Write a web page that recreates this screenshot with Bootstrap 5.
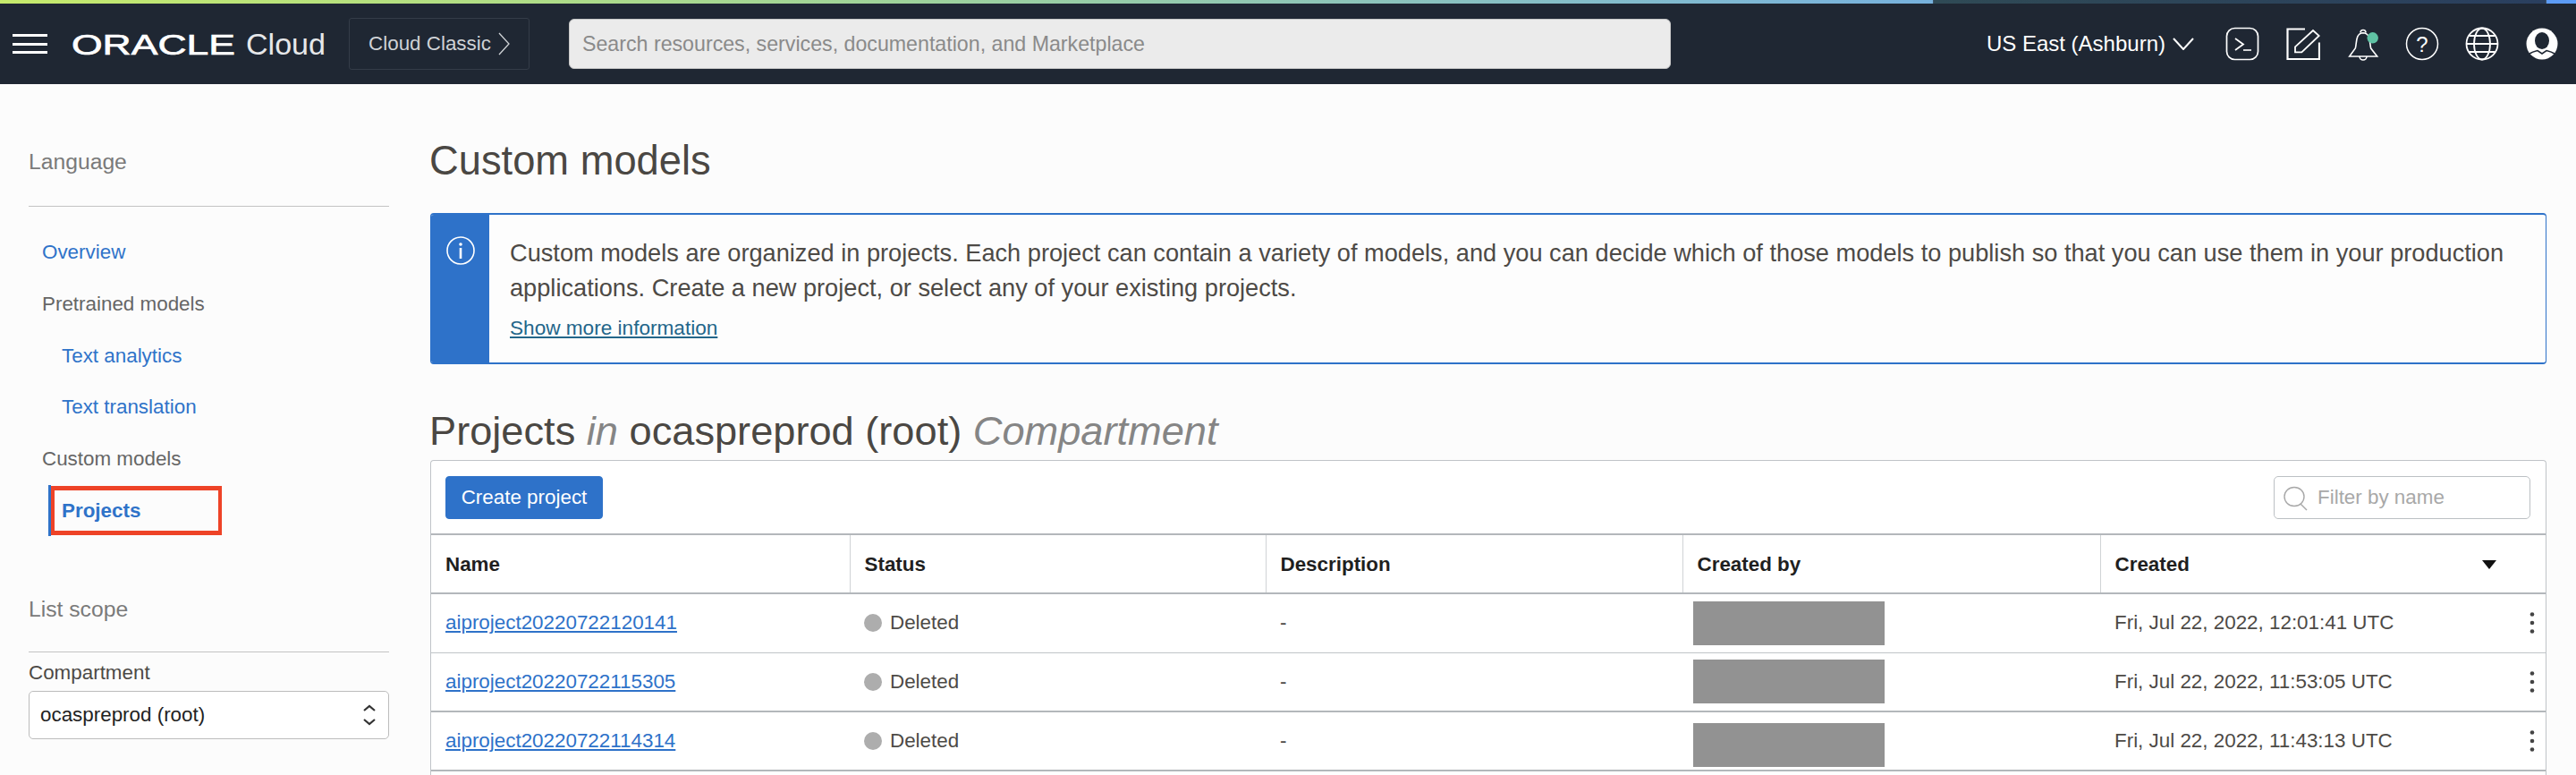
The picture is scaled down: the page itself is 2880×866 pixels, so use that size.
<!DOCTYPE html>
<html lang="en">
<head>
<meta charset="utf-8">
<title>Custom models</title>
<link href="https://cdn.jsdelivr.net/npm/bootstrap@5.3.0/dist/css/bootstrap.min.css" rel="stylesheet">
<style>
html,body{height:866px;overflow:hidden;}
body{background:#fcfcfc;font-family:"Liberation Sans",Arial,sans-serif;font-size:22.4px;color:#4d4a46;}
.top-stripe{height:4px;background:linear-gradient(90deg,#c6ea6c 0%,#9fd39a 35%,#7cb6d8 70%,#5c9bf6 100%);}
.drop-panel{position:absolute;top:0;left:2161px;width:686px;height:20px;background:linear-gradient(90deg,#2f4a55,#2a3f5f);border:1.5px solid #3d5266;border-top:0;border-radius:0 0 12px 12px;}
.oci-bar{height:90px;background:#1f2733;padding:0;flex-wrap:nowrap;justify-content:flex-start;}
.burger{width:39px;margin-left:14px;}
.burger span{height:3px;background:#fff;margin-bottom:6.5px;}
.burger span:last-child{margin-bottom:0;}
.logo-svg{margin-left:27px;}
.classic-box{margin-left:26px;width:202px;height:58px;border:1px solid #343c48;border-radius:3px;color:#cfd2d6;font-size:22.4px;}
.search-box.form-control{margin-left:44px;width:1232px;height:56px;flex:none;background:#ebebeb;border:1px solid #c7c7c7;border-radius:6px;padding:0 14px;font-size:23.2px;}
.search-box::placeholder{color:#8a8a8a;opacity:1;}
.region-name{color:#fff;font-size:24px;}
.icon-row{gap:27px;margin:0 18px 0 34px;}
.side-col{width:403px;margin-left:32px;margin-right:46px;flex:none;}
.side-head{font-size:24.7px;line-height:30px;color:#7a7a7a;}
.lang-head{margin-top:72px;padding-bottom:34px;border-bottom:1px solid #c4c4c4;}
.scope-head{margin-top:67px;padding-bottom:32px;border-bottom:1px solid #c4c4c4;}
.side-nav{margin-top:22px;}
.side-nav .nav-item{height:57.8px;display:flex;align-items:center;padding-left:15px;color:#666;}
.side-nav a{text-decoration:none;color:#2f73c9;}
.side-nav .sub-item{padding-left:37px;}
.side-nav .active-item{margin-left:22px;padding-left:12px;border-left:3px solid #2f73c9;height:57px;margin-top:0;}
.side-nav .active-item a{font-weight:700;}
.red-mark{position:absolute;left:0;top:1px;width:191px;height:55px;border:solid #ee4327;border-width:5px 4px;}
.comp-label{margin-top:9px;line-height:28px;margin-bottom:6px;display:block;color:#4d4a46;}
.comp-select.form-select{height:54px;font-size:22.4px;padding:0 40px 0 12px;color:#222;background-color:#fff;border:1px solid #bcbcbc;border-radius:5px;background-size:16px 26px;background-position:right 13px center;background-image:url("data:image/svg+xml,%3Csvg xmlns='http://www.w3.org/2000/svg' viewBox='0 0 16 26'%3E%3Cpath d='M2 8l6-5 6 5M2 18l6 5 6-5' fill='none' stroke='%23333' stroke-width='2.2'/%3E%3C/svg%3E");}
.main-col{width:2366px;flex:none;}
.page-title{font-size:45.3px;line-height:54px;font-weight:400;margin:59px 0 31px -1px;color:#4a4743;}
.info-box.alert{height:169px;padding:0;margin:0;border-radius:4px;border:solid #2e72c9;border-width:2px 1px;background:#fdfdfd;color:#4d4a46;overflow:hidden;}
.info-stripe{width:65px;background:#2e72c9;flex:none;text-align:center;padding-top:22px;}
.info-text{padding:23px 30px 0 23px;font-size:27.2px;line-height:39px;}
.info-text a{display:block;font-size:22.6px;line-height:30px;margin-top:11px;color:#23668a;}
.section-title{font-size:45.2px;line-height:54px;font-weight:400;margin:48px 0 5px -1px;color:#4a4743;}
.section-title em{color:#858585;}
.proj-card{background:#fff;border:1px solid #c0c4c8;border-bottom:0;border-radius:4px 4px 0 0;height:352px;overflow:hidden;}
.tool-row{height:83px;padding:0 17px 0 16px;border-bottom:2.5px solid #b3b7bb;}
.make-btn.btn{height:48px;width:176px;padding:0;background:#2e72c9;border-color:#2e72c9;font-size:22.4px;border-radius:4px;}
.filter-wrap{width:287px;}
.filter-wrap svg{position:absolute;left:10px;top:11px;}
.filter-wrap .form-control{height:48px;padding:0 10px 0 48px;font-size:22.4px;border:1px solid #bcc0c4;border-radius:5px;}
.filter-wrap .form-control::placeholder{color:#a8a8a8;opacity:1;}
.proj-table.table{table-layout:fixed;width:2365px;margin:0;color:#4d4a46;background:#fff;--bs-table-bg:#fff;--bs-table-color:#4d4a46;}
.proj-table th,.proj-table td{padding:0 16px;font-size:22.4px;vertical-align:middle;white-space:nowrap;}
.proj-table thead tr{height:65px;}
.proj-table th{color:#1f1f1f;font-weight:700;padding-top:2px;border-bottom:2.5px solid #b3b7bb;border-right:1px solid #d0d3d6;}
.proj-table th:last-child{border-right:0;}
.proj-table tbody tr{height:66px;}
.proj-table td{border-bottom:2px solid #b3b7bb;}
.proj-table tbody tr.thin-line td{border-bottom:1px solid #c0c4c8;}
.proj-table td a{color:#2e72c9;}
.proj-table td.redact-cell{padding-left:12px;}
.redacted{width:214px;height:49px;background:#929292;}
.redacted.low-one{margin-top:8px;}
.state-dot{width:20px;height:20px;border-radius:50%;background:#adadad;margin-right:9px;}
.sort-caret{width:0;height:0;border:8px solid transparent;border-top:10px solid #111;border-bottom:0;margin-right:40px;}
.kebab{margin-right:-3px;}
</style>
</head>
<body>
<div class="top-stripe"></div>
<div class="drop-panel"></div>
<nav class="navbar oci-bar d-flex align-items-center">
  <div class="burger d-flex flex-column"><span class="d-block"></span><span class="d-block"></span><span class="d-block"></span></div>
  <svg class="logo-svg" width="284" height="40" viewBox="0 0 284 40">
    <text x="0" y="32" font-family="Liberation Sans" font-size="32" fill="#fff" stroke="#fff" stroke-width=".7" textLength="183" lengthAdjust="spacingAndGlyphs">ORACLE</text>
    <text x="195" y="32" font-family="Liberation Sans" font-size="34" fill="#e6e8ea" textLength="89" lengthAdjust="spacingAndGlyphs">Cloud</text>
  </svg>
  <div class="classic-box d-flex align-items-center justify-content-center gap-2">
    <span>Cloud Classic</span>
    <svg width="13" height="26" viewBox="0 0 13 26"><path d="M1 1l11 12L1 25" fill="none" stroke="#cfd2d6" stroke-width="1.3"/></svg>
  </div>
  <input class="form-control search-box" type="text" placeholder="Search resources, services, documentation, and Marketplace">
  <div class="ms-auto d-flex align-items-center">
    <span class="region-name">US East (Ashburn)</span>
    <svg class="ms-2" width="24" height="14" viewBox="0 0 24 14"><path d="M1 1l11 12L23 1" fill="none" stroke="#fff" stroke-width="2"/></svg>
    <div class="icon-row d-flex align-items-center">
      <svg width="40" height="40" viewBox="0 0 40 40" fill="none" stroke="#fff"><rect x="2.5" y="2.5" width="35" height="35" rx="9" stroke-width="1.7"/><path d="M12 14l9 6.5L12 27" stroke-width="1.8"/><path d="M21 27h9" stroke-width="1.6"/></svg>
      <svg width="40" height="40" viewBox="0 0 40 40" fill="none" stroke="#fff" stroke-width="2"><path d="M23 3.5H3.5V37H39V18.5" stroke-width="2.2"/><path d="M12 23.3L32 5l6.7 6-19.4 18.3H12z" stroke-width="1.8"/></svg>
      <svg width="40" height="40" viewBox="0 0 40 40" fill="none" stroke="#fff" stroke-width="1.6"><path d="M5.7 34L12.3 25C14 20 12 8 21 7.7 30 8 28 20 29.7 25L36.7 34z"/><path d="M18 7.5a3 3 0 1 1 6 0M17 34a4 4 0 0 0 8 0"/><circle cx="31.7" cy="13.3" r="6.2" fill="#5fc2a4" stroke="none"/></svg>
      <svg width="40" height="40" viewBox="0 0 40 40"><circle cx="20" cy="20" r="17.5" fill="none" stroke="#fff" stroke-width="1.5"/><text x="20" y="28.5" text-anchor="middle" font-family="Liberation Sans" font-size="24" fill="#fff">?</text></svg>
      <svg width="40" height="40" viewBox="0 0 40 40" fill="none" stroke="#fff" stroke-width="1.8"><circle cx="20" cy="20" r="17.5"/><ellipse cx="20" cy="20" rx="9" ry="17.5"/><path d="M2.5 20h35M5.5 11h29M5.5 29h29"/></svg>
      <svg width="40" height="40" viewBox="0 0 40 40"><circle cx="20" cy="20" r="17.5" fill="#fff"/><ellipse cx="20" cy="16.5" rx="8" ry="9.5" fill="#1f2733"/><path d="M6 31c3-2 7-3 9-3.500l5 3.500 5-3.500c2 .5 6 1.500 9 3.500" fill="none" stroke="#1f2733" stroke-width="1.6"/></svg>
    </div>
  </div>
</nav>
<div class="d-flex">
  <aside class="side-col">
    <div class="side-head lang-head">Language</div>
    <div class="nav flex-column side-nav">
      <div class="nav-item"><a href="#">Overview</a></div>
      <div class="nav-item">Pretrained models</div>
      <div class="nav-item sub-item"><a href="#">Text analytics</a></div>
      <div class="nav-item sub-item"><a href="#">Text translation</a></div>
      <div class="nav-item">Custom models</div>
      <div class="nav-item active-item position-relative"><a href="#">Projects</a><span class="red-mark"></span></div>
    </div>
    <div class="side-head scope-head">List scope</div>
    <label class="comp-label" for="cmp">Compartment</label>
    <select class="form-select comp-select" id="cmp"><option>ocaspreprod (root)</option></select>
  </aside>
  <main class="main-col">
    <h1 class="page-title">Custom models</h1>
    <div class="alert info-box d-flex">
      <div class="info-stripe"><svg width="34" height="34" viewBox="0 0 34 34"><circle cx="17" cy="17" r="15" fill="none" stroke="#fff" stroke-width="1.6"/><circle cx="17" cy="10" r="1.8" fill="#fff"/><rect x="15.700" y="14" width="2.6" height="12" fill="#fff"/></svg></div>
      <div class="info-text">Custom models are organized in projects. Each project can contain a variety of models, and you can decide which of those models to publish so that you can use them in your production applications. Create a new project, or select any of your existing projects.<a href="#">Show more information</a></div>
    </div>
    <h2 class="section-title">Projects <em>in</em> ocaspreprod (root) <em>Compartment</em></h2>
    <div class="proj-card">
      <div class="tool-row d-flex align-items-center justify-content-between">
        <button class="btn btn-primary make-btn" type="button">Create project</button>
        <div class="filter-wrap position-relative">
          <svg width="30" height="28" viewBox="0 0 30 28" fill="none" stroke="#a8a8a8" stroke-width="1.4"><ellipse cx="13" cy="12" rx="11" ry="10.500"/><path d="M20 20l7 7"/></svg>
          <input class="form-control" type="text" placeholder="Filter by name">
        </div>
      </div>
      <table class="table proj-table">
        <colgroup><col style="width:468px"><col style="width:465px"><col style="width:466px"><col style="width:467px"><col style="width:499px"></colgroup>
        <thead><tr><th>Name</th><th>Status</th><th>Description</th><th>Created by</th><th><div class="d-flex align-items-center justify-content-between">Created<span class="sort-caret"></span></div></th></tr></thead>
        <tbody>
          <tr class="thin-line"><td><a href="#">aiproject20220722120141</a></td><td><div class="d-flex align-items-center"><span class="state-dot"></span>Deleted</div></td><td>-</td><td class="redact-cell"><div class="redacted"></div></td><td><div class="d-flex align-items-center justify-content-between">Fri, Jul 22, 2022, 12:01:41 UTC<svg class="kebab" width="6" height="24" viewBox="0 0 6 24"><circle cx="3" cy="2.500" r="2.300" fill="#444"/><circle cx="3" cy="12" r="2.300" fill="#444"/><circle cx="3" cy="21.500" r="2.300" fill="#444"/></svg></div></td></tr>
          <tr><td><a href="#">aiproject20220722115305</a></td><td><div class="d-flex align-items-center"><span class="state-dot"></span>Deleted</div></td><td>-</td><td class="redact-cell"><div class="redacted"></div></td><td><div class="d-flex align-items-center justify-content-between">Fri, Jul 22, 2022, 11:53:05 UTC<svg class="kebab" width="6" height="24" viewBox="0 0 6 24"><circle cx="3" cy="2.500" r="2.300" fill="#444"/><circle cx="3" cy="12" r="2.300" fill="#444"/><circle cx="3" cy="21.500" r="2.300" fill="#444"/></svg></div></td></tr>
          <tr><td><a href="#">aiproject20220722114314</a></td><td><div class="d-flex align-items-center"><span class="state-dot"></span>Deleted</div></td><td>-</td><td class="redact-cell"><div class="redacted low-one"></div></td><td><div class="d-flex align-items-center justify-content-between">Fri, Jul 22, 2022, 11:43:13 UTC<svg class="kebab" width="6" height="24" viewBox="0 0 6 24"><circle cx="3" cy="2.500" r="2.300" fill="#444"/><circle cx="3" cy="12" r="2.300" fill="#444"/><circle cx="3" cy="21.500" r="2.300" fill="#444"/></svg></div></td></tr>
        </tbody>
      </table>
    </div>
  </main>
</div>
<script src="https://cdn.jsdelivr.net/npm/bootstrap@5.3.0/dist/js/bootstrap.bundle.min.js"></script>
</body>
</html>
